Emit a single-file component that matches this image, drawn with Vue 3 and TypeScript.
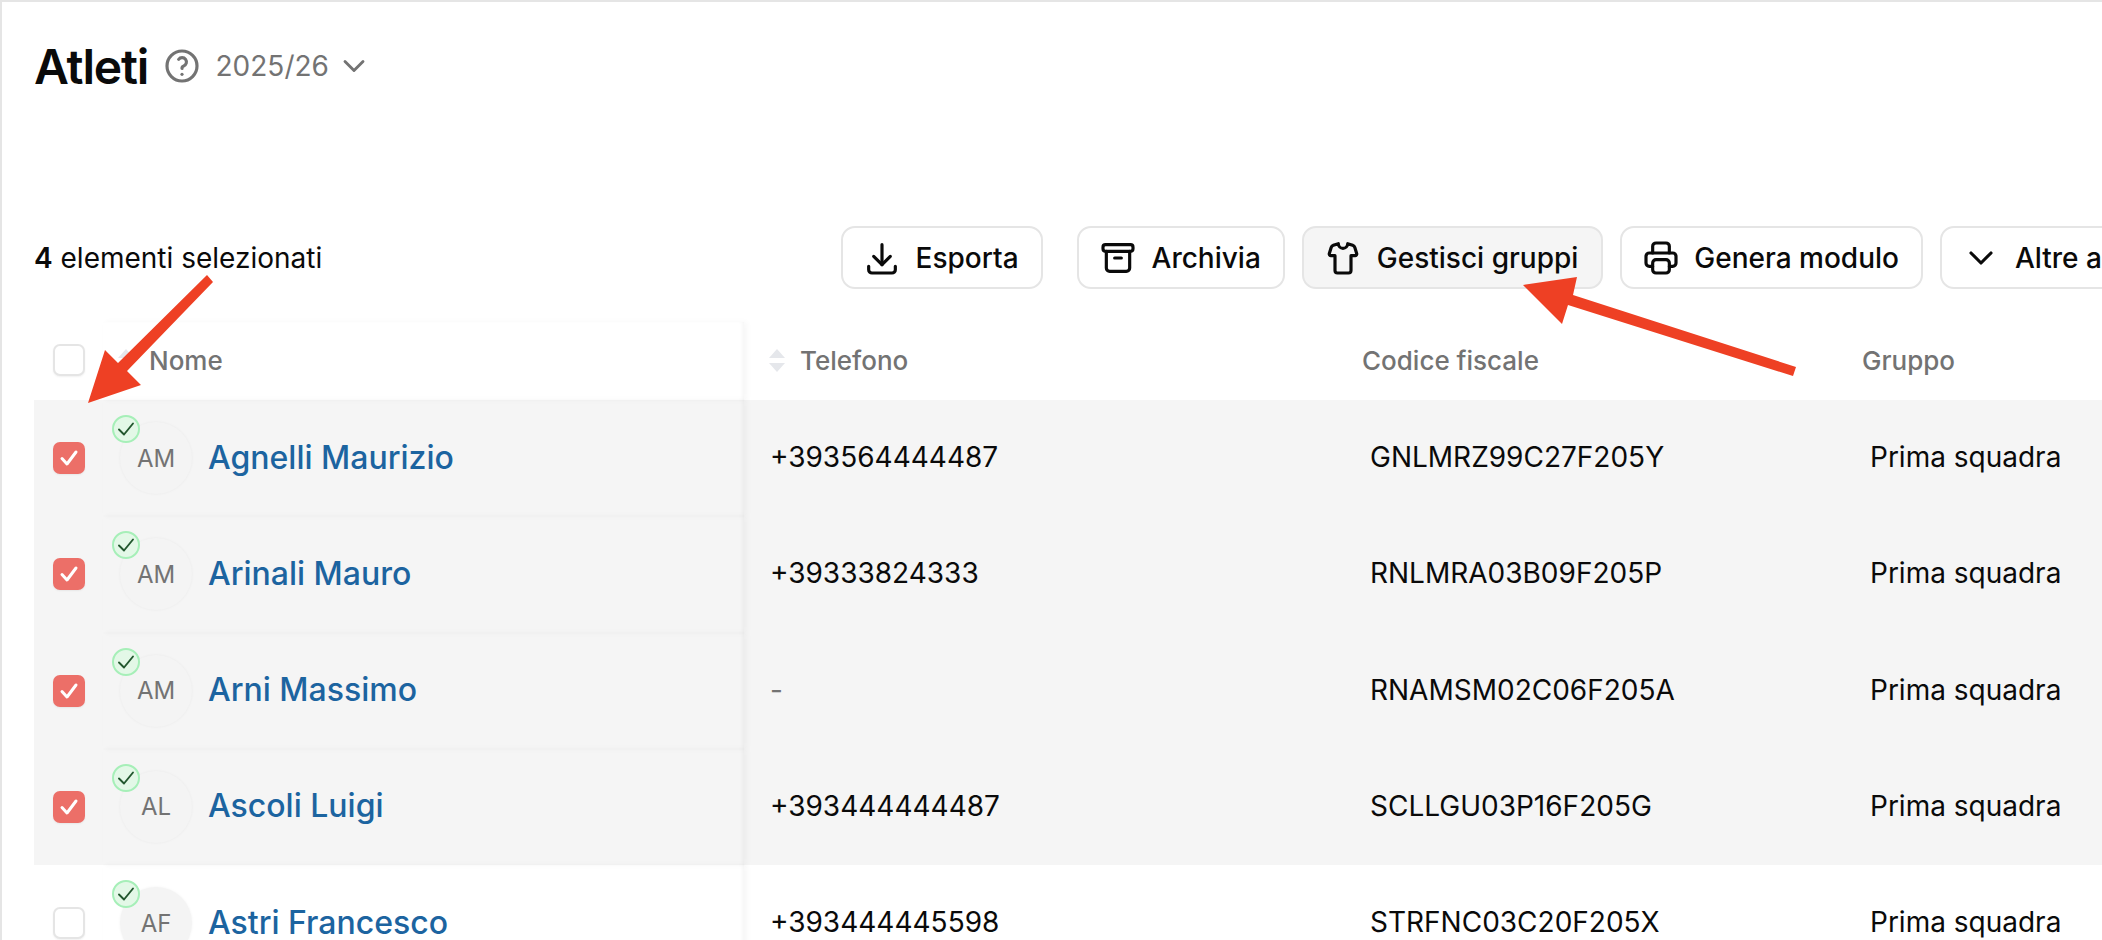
<script setup lang="ts">
interface Athlete { name: string; initials: string; phone: string; cf: string; group: string; selected: boolean }
const athletes: Athlete[] = [
  { name: 'Agnelli Maurizio', initials: 'AM', phone: '+393564444487', cf: 'GNLMRZ99C27F205Y', group: 'Prima squadra', selected: true },
  { name: 'Arinali Mauro', initials: 'AM', phone: '+39333824333', cf: 'RNLMRA03B09F205P', group: 'Prima squadra', selected: true },
  { name: 'Arni Massimo', initials: 'AM', phone: '-', cf: 'RNAMSM02C06F205A', group: 'Prima squadra', selected: true },
  { name: 'Ascoli Luigi', initials: 'AL', phone: '+393444444487', cf: 'SCLLGU03P16F205G', group: 'Prima squadra', selected: true },
  { name: 'Astri Francesco', initials: 'AF', phone: '+393444445598', cf: 'STRFNC03C20F205X', group: 'Prima squadra', selected: false },
]
</script>

<template>
  <div class="page">
    <header class="title-row">
      <h1 class="title">Atleti</h1>
      <svg class="ico help" viewBox="0 0 24 24"><circle cx="12" cy="12" r="9" /><path d="M12 17v.01" /><path d="M12 13.5a1.5 1.5 0 0 1 1 -1.5a2.6 2.6 0 1 0 -3 -4" /></svg>
      <span class="season">2025/26</span>
      <svg class="ico season-chevron" viewBox="0 0 24 24"><path d="M6 9l6 6l6 -6" /></svg>
    </header>

    <div class="toolbar">
      <div class="selection"><strong>4</strong> elementi selezionati</div>
      <button class="btn btn-first">
        <svg class="ico" viewBox="0 0 24 24"><path d="M4 17v2a2 2 0 0 0 2 2h12a2 2 0 0 0 2 -2v-2" /><path d="M7 11l5 5l5 -5" /><path d="M12 4v12" /></svg>
        Esporta
      </button>
      <button class="btn btn-archive">
        <svg class="ico" viewBox="0 0 24 24"><rect x="3" y="4" width="18" height="4" rx="1.5" /><path d="M5 8v10a2 2 0 0 0 2 2h10a2 2 0 0 0 2 -2v-10" /><path d="M10 12h4" /></svg>
        Archivia
      </button>
      <button class="btn btn-active">
        <svg class="ico" viewBox="0 0 24 24"><path d="M9.2 3.4a2.8 2.8 0 0 0 5.6 0l3 1a2 2 0 0 1 1.3 1.3l1.1 3.6a1 1 0 0 1 -1 1.3h-2.4v8.9a1.5 1.5 0 0 1 -1.5 1.5h-6.6a1.5 1.5 0 0 1 -1.5 -1.5v-8.9h-2.4a1 1 0 0 1 -1 -1.3l1.1 -3.6a2 2 0 0 1 1.3 -1.3z" /></svg>
        Gestisci gruppi
      </button>
      <button class="btn">
        <svg class="ico" viewBox="0 0 24 24"><path d="M17 17h2a2 2 0 0 0 2 -2v-4a2 2 0 0 0 -2 -2h-14a2 2 0 0 0 -2 2v4a2 2 0 0 0 2 2h2" /><path d="M17 9v-4a2 2 0 0 0 -2 -2h-6a2 2 0 0 0 -2 2v4" /><rect x="7" y="13" width="10" height="8" rx="2" /></svg>
        Genera modulo
      </button>
      <button class="btn btn-more">
        <svg class="ico" viewBox="0 0 24 24"><path d="M6 9l6 6l6 -6" /></svg>
        Altre azioni
      </button>
    </div>

    <div class="table">
      <div class="row head">
        <div class="cell check-cell"><span class="checkbox"></span></div>
        <div class="cell name-cell head-name">
          <span class="sort"><i class="up"></i><i class="down"></i></span>
          <span>Nome</span>
        </div>
        <div class="cell phone-cell head-phone">
          <span class="sort"><i class="up"></i><i class="down"></i></span>
          <span>Telefono</span>
        </div>
        <div class="cell col-wide head-plain">Codice fiscale</div>
        <div class="cell col-wide head-plain">Gruppo</div>
      </div>

      <div v-for="a in athletes" :key="a.cf" class="row" :class="{ selected: a.selected }">
        <div class="cell check-cell">
          <span class="checkbox" :class="{ checked: a.selected }">
            <svg v-if="a.selected" viewBox="0 0 32 32"><path d="M9 16.5l5 5.5l9 -12" /></svg>
          </span>
        </div>
        <div class="cell name-cell">
          <span class="avatar">
            {{ a.initials }}
            <span class="badge"><svg viewBox="0 0 24 24"><path d="M5 12.5l5 5l9 -11" /></svg></span>
          </span>
          <a class="name">{{ a.name }}</a>
        </div>
        <div class="cell phone-cell" :class="{ muted: a.phone === '-' }">{{ a.phone }}</div>
        <div class="cell col-wide">{{ a.cf }}</div>
        <div class="cell col-wide">{{ a.group }}</div>
      </div>
    </div>

    <svg class="arrows" viewBox="0 0 2102 940" width="2102" height="940">
      <polygon points="207,275 213,282 127,371 141,385 88,403 105,350 118,363" />
      <polygon points="1796,367 1793,376 1568,305 1562,324 1523,285 1577,277 1573,295" />
    </svg>
  </div>
</template>

<style>
html, body { margin: 0; height: 940px; overflow: hidden; background: #fff; }
</style>

<style scoped>
.page {
  position: relative;
  width: 2102px;
  height: 940px;
  box-sizing: border-box;
  overflow: hidden;
  border-top: 2px solid #e5e5e5;
  border-left: 2px solid #e5e5e5;
  font-family: Inter, "Liberation Sans", sans-serif;
  font-size: 28px;
  color: #0a0a0a;
  background: #fff;
}
.ico {
  width: 40px;
  height: 40px;
  flex: none;
  fill: none;
  stroke: currentColor;
  stroke-width: 1.9;
  stroke-linecap: round;
  stroke-linejoin: round;
}
.title-row {
  display: flex;
  align-items: center;
  height: 40px;
  padding: 44px 0 0 32px;
}
.title {
  margin: 0;
  font-size: 48px;
  font-weight: 600;
  letter-spacing: -1.2px;
  color: #0a0a0a;
}
.help { color: #737373; margin-left: 14px; }
.season { color: #737373; margin-left: 13.5px; }
.season-chevron { color: #737373; width: 36px; height: 36px; margin-left: 7px; }
.toolbar {
  display: flex;
  align-items: center;
  gap: 17px;
  margin-top: 140px;
  padding-left: 32px;
}
.selection { width: 790px; flex: none; white-space: nowrap; }
.selection strong { font-weight: 600; }
.btn {
  display: flex;
  align-items: center;
  gap: 13.5px;
  height: 63px;
  box-sizing: border-box;
  padding: 0 22.5px 0 19px;
  flex: none;
  border: 2px solid #e5e5e5;
  border-radius: 14px;
  background: #fff;
  font: 500 28px Inter, "Liberation Sans", sans-serif;
  color: #0a0a0a;
  white-space: nowrap;
}
.btn-archive { margin-left: 17px; }
.btn-active { background: #f5f5f5; }
.table { margin-top: 33px; }
.row {
  display: grid;
  grid-template-columns: 69px 641px 600px 500px 1fr;
  height: 116.25px;
  margin-left: 32px;
}
.row.head { height: 78px; color: #737373; font-size: 26px; font-weight: 500; }
.row.selected { background: #f5f5f5; }
.cell {
  display: flex;
  align-items: center;
  box-sizing: border-box;
  white-space: nowrap;
  padding-bottom: 2px;
}
.check-cell { padding: 0 0 0 19px; }
.row:not(.head) .name-cell { padding-bottom: 0; }
.row.head .check-cell { padding-bottom: 2px; }
.checkbox {
  width: 32px;
  height: 32px;
  box-sizing: border-box;
  border: 2px solid #e5e5e5;
  border-radius: 7px;
  background: #fff;
  box-shadow: 0 1px 2px rgba(0, 0, 0, .06);
}
.checkbox.checked { border: 0; background: #ec6f68; }
.checkbox svg { display: block; width: 32px; height: 32px; fill: none; stroke: #fff; stroke-width: 3; stroke-linecap: round; stroke-linejoin: round; }
.name-cell {
  padding-left: 17px;
  gap: 16px;
  box-shadow: 3px 0 6px rgba(0, 0, 0, .035), inset -3px 0 4px -2px rgba(0, 0, 0, .05), 0 0 2px rgba(0, 0, 0, .012);
}
.name { margin-bottom: 2px; }
.head-name { gap: 0; padding-left: 15px; }
.head-name .sort { margin-right: 15px; }
.phone-cell { padding-left: 26px; }
.head-phone { padding-left: 25px; }
.sort { display: flex; flex-direction: column; gap: 5px; margin-right: 15px; }
.sort i { display: block; width: 0; height: 0; border-left: 8px solid transparent; border-right: 8px solid transparent; }
.sort .up { border-bottom: 9px solid #e5e7eb; }
.sort .down { border-top: 9px solid #e5e7eb; }
.col-wide { padding-left: 26px; }
.head-plain { padding-left: 18px; }
.avatar {
  position: relative;
  display: flex;
  align-items: center;
  justify-content: center;
  width: 72px;
  height: 72px;
  flex: none;
  box-sizing: border-box;
  border-radius: 50%;
  background: #f4f4f4;
  box-shadow: 0 0 3px rgba(0, 0, 0, .05);
  font-size: 24px;
  color: #737373;
}
.badge {
  position: absolute;
  left: -8px;
  top: -7px;
  width: 28px;
  height: 28px;
  box-sizing: border-box;
  border: 2px solid #a6efb8;
  border-radius: 50%;
  background: #e3f8e7;
}
.badge svg { display: block; width: 24px; height: 24px; fill: none; stroke: #22572e; stroke-width: 1.9; stroke-linecap: round; stroke-linejoin: round; }
.name { font-size: 32px; font-weight: 500; color: #1c64a0; }
.muted { color: #737373; }
.arrows { position: absolute; left: -2px; top: -2px; pointer-events: none; }
.arrows polygon { fill: #ee4024; }
</style>
